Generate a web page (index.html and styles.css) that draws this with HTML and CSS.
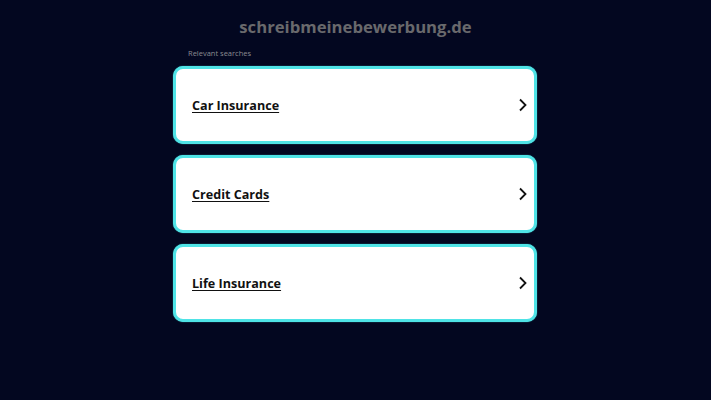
FILE: index.html
```html
<!DOCTYPE html>
<html>
<head>
<meta charset="utf-8">
<link rel="stylesheet" href="styles.css">
</head>
<body>
<div class="page">
  <div class="domain">schreibmeinebewerbung.de</div>
  <div class="list">
    <div class="label">Relevant searches</div>
    <a class="card" href="#"><span class="text">Car Insurance</span>
      <svg class="chev" width="10" height="14" viewBox="0 0 10 14"><path d="M2 1.5 L7.5 7 L2 12.5" fill="none" stroke="#111" stroke-width="1.8"/></svg></a>
    <a class="card" href="#"><span class="text">Credit Cards</span>
      <svg class="chev" width="10" height="14" viewBox="0 0 10 14"><path d="M2 1.5 L7.5 7 L2 12.5" fill="none" stroke="#111" stroke-width="1.8"/></svg></a>
    <a class="card" href="#"><span class="text">Life Insurance</span>
      <svg class="chev" width="10" height="14" viewBox="0 0 10 14"><path d="M2 1.5 L7.5 7 L2 12.5" fill="none" stroke="#111" stroke-width="1.8"/></svg></a>
  </div>
</div>
</body>
</html>
```
FILE: styles.css
```css
html, body { margin: 0; padding: 0; }
body {
  background: #030720;
  font-family: "Open Sans", "Liberation Sans", sans-serif;
  width: 711px;
  height: 400px;
  overflow: hidden;
}
.page {
  display: flex;
  flex-direction: column;
  align-items: center;
  padding-top: 15px;
}
.domain {
  color: #69696c;
  font-weight: 700;
  font-size: 16.7px;
  line-height: 24px;
}
.list {
  width: 364px;
  display: flex;
  flex-direction: column;
  gap: 11px;
  margin-top: 9px;
  margin-left: -1px;
}
.label {
  color: #8a8a90;
  font-size: 7.5px;
  line-height: 11px;
  padding-left: 15px;
  margin-bottom: -4px;
}
.card {
  box-sizing: border-box;
  height: 78px;
  background: #fff;
  border: 3px solid #4fe3e6;
  border-radius: 10px;
  display: flex;
  align-items: center;
  justify-content: space-between;
  padding: 0 6px 0 16px;
  text-decoration: none;
  box-shadow: 0 0 1px #4fe3e6;
}
.text {
  color: #111;
  font-weight: 700;
  font-size: 12.6px;
  text-decoration: underline;
  text-underline-offset: 2px;
}
.chev { display: block; }
```
